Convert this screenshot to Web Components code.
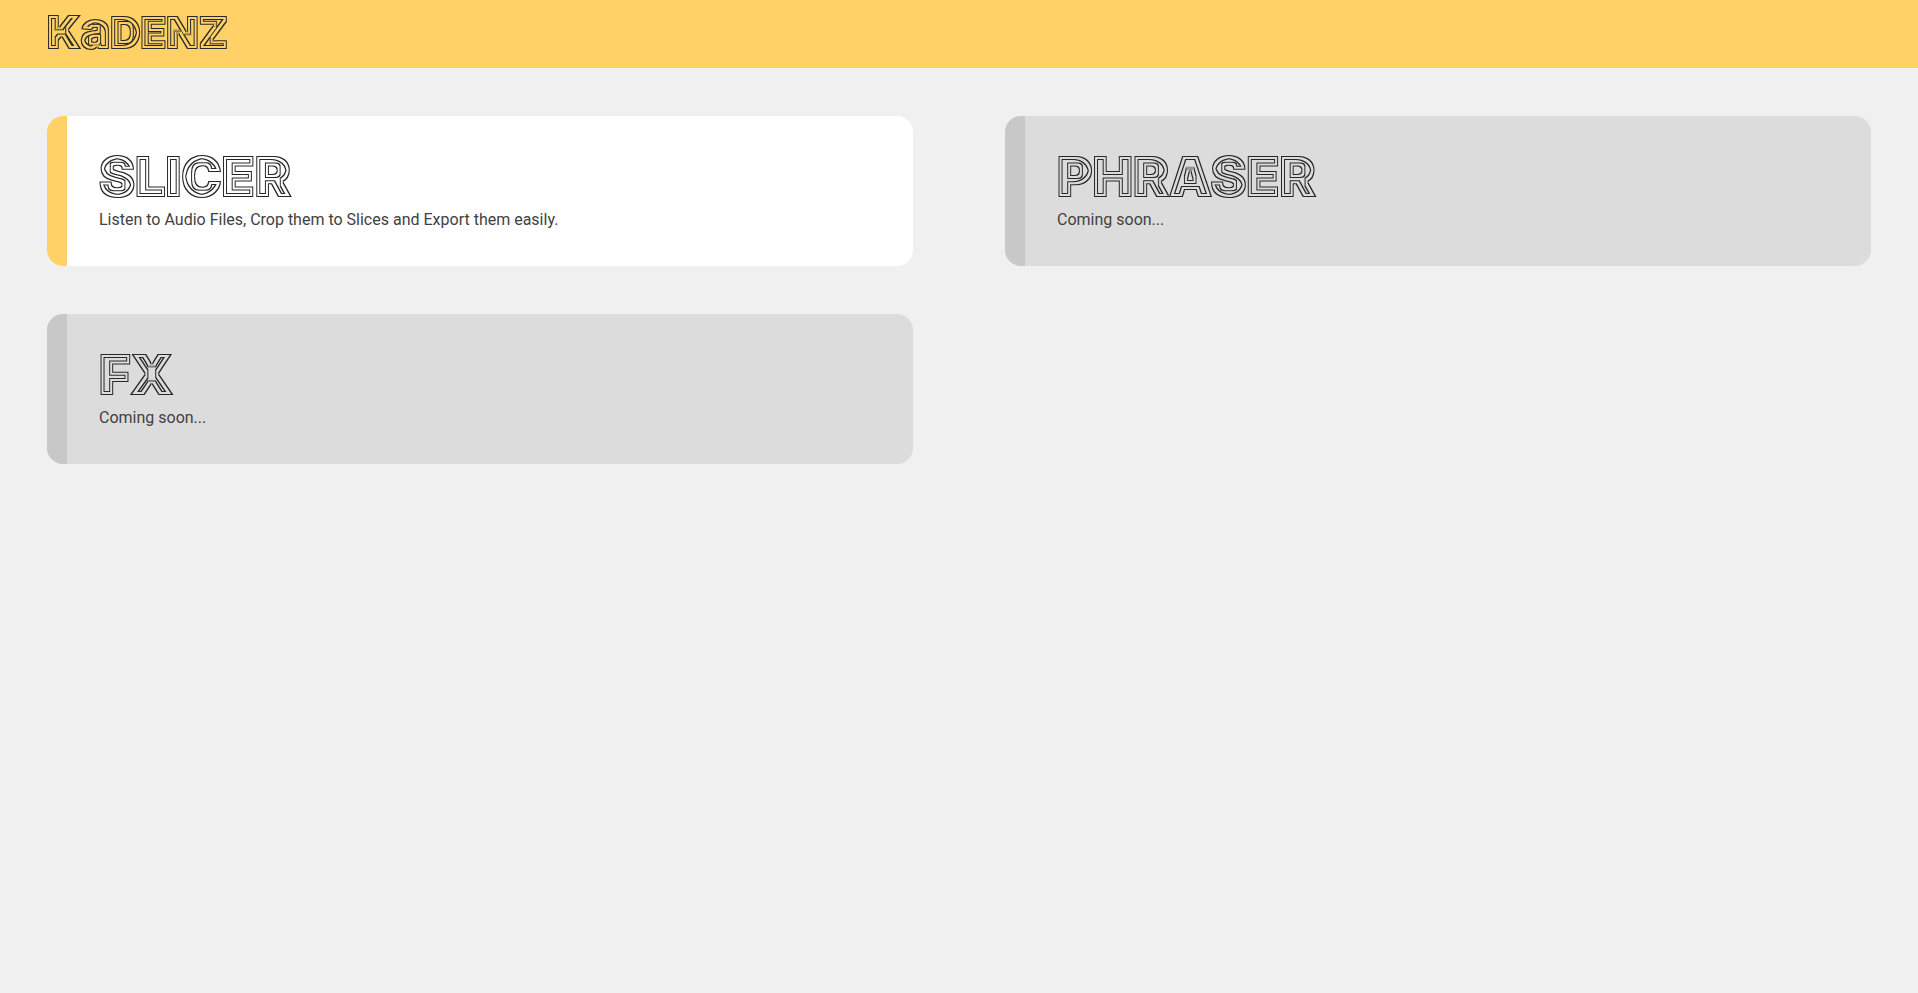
<!DOCTYPE html>
<html lang="en">
<head>
<meta charset="utf-8">
<meta name="viewport" content="width=device-width, initial-scale=1">
<title>Kadenz</title>
<style>
  body { margin: 0; background: #f0f0f0; color: #414141; font: 16px/24px Roboto, "Liberation Sans", sans-serif; }
</style>
</head>
<body>
<kadenz-app></kadenz-app>

<template id="line-title">
  <style>
    :host { display: block; font-family: Inter, "Liberation Sans", sans-serif; font-weight: 900; color: #282828; white-space: nowrap; }
    .lined { display: block; width: max-content; -webkit-text-stroke: 2px #282828; filter: url(#lines); }
    svg { display: block; width: 0; height: 0; }
  </style>
  <svg aria-hidden="true">
    <filter id="lines" x="-5%" y="-5%" width="110%" height="110%" color-interpolation-filters="sRGB">
      <feMorphology in="SourceGraphic" operator="erode" radius="1" result="e1"/>
      <feMorphology in="SourceGraphic" operator="erode" radius="3" result="e2"/>
      <feMorphology in="SourceGraphic" operator="erode" radius="4" result="e3"/>
      <feComposite in="SourceGraphic" in2="e1" operator="out" result="outer"/>
      <feComposite in="e2" in2="e3" operator="out" result="inner"/>
      <feMerge><feMergeNode in="outer"/><feMergeNode in="inner"/></feMerge>
    </filter>
  </svg>
  <span class="lined"><slot></slot></span>
</template>

<template id="app-header">
  <style>
    :host { display: block; padding: 0 47px 8px; background: #ffd166; }
    a { display: block; width: max-content; color: inherit; text-decoration: none; font-size: 50px; line-height: 60px; }
    line-title span { line-height: 1; }
    .k { font-size: 44px; }
    .a { font-size: 50px; }
    .rest { font-size: 42px; text-transform: uppercase; }
  </style>
  <a href="#"><line-title><span class="k">K</span><span class="a">a</span><span class="rest">denz</span></line-title></a>
</template>

<template id="tool-card">
  <style>
    :host { display: block; border-radius: 16px; overflow: hidden; background: #fff; --bar: #ffd166; }
    :host([disabled]) { background: #dcdcdc; --bar: #c8c8c8; }
    a { display: block; color: inherit; text-decoration: none; border-left: 20px solid var(--bar); padding: 32px; }
    h2 { margin: 0; font-size: 54px; line-height: 58px; }
    p { margin: 0; padding: 2px 0; }
  </style>
  <a>
    <h2><line-title><slot name="title"></slot></line-title></h2>
    <p><slot></slot></p>
  </a>
</template>

<template id="kadenz-app">
  <style>
    :host { display: block; }
    main { display: grid; grid-template-columns: 1fr 1fr; gap: 48px 92px; padding: 48px 47px; }
  </style>
  <app-header></app-header>
  <main>
    <tool-card href="#slicer"><span slot="title">SLICER</span>Listen to Audio Files, Crop them to Slices and Export them easily.</tool-card>
    <tool-card disabled><span slot="title">PHRASER</span>Coming soon...</tool-card>
    <tool-card disabled><span slot="title">FX</span>Coming soon...</tool-card>
  </main>
</template>

<script>
  class TemplateElement extends HTMLElement {
    constructor() {
      super();
      const template = document.getElementById(this.localName);
      this.attachShadow({ mode: "open" }).append(template.content.cloneNode(true));
    }
  }
  class LineTitle extends TemplateElement {}
  class AppHeader extends TemplateElement {}
  class ToolCard extends TemplateElement {
    connectedCallback() {
      if (this.hasAttribute("href")) this.shadowRoot.querySelector("a").href = this.getAttribute("href");
    }
  }
  class KadenzApp extends TemplateElement {}
  customElements.define("line-title", LineTitle);
  customElements.define("app-header", AppHeader);
  customElements.define("tool-card", ToolCard);
  customElements.define("kadenz-app", KadenzApp);
</script>
</body>
</html>
